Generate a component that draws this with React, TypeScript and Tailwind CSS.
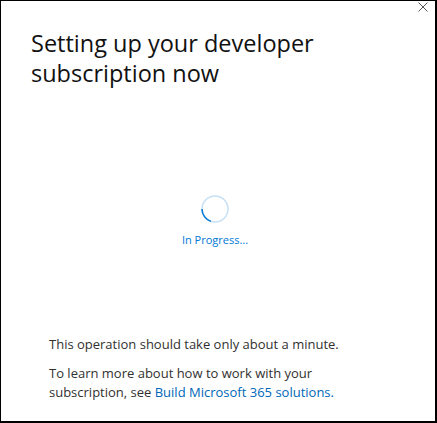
export default function App() {
  return (
    <div
      className="relative w-[437px] h-[423px] bg-white border-l border-t border-r-2 border-b-2 border-black"
      style={{ fontFamily: '"Open Sans", "Noto Sans", sans-serif' }}
    >
      {/* close */}
      <button className="absolute top-0 right-[5px] w-[12px] h-[12px] text-[#555]">
        <svg viewBox="0 0 10 10" className="w-[10px] h-[10px]" fill="none" stroke="currentColor" strokeWidth="1">
          <path d="M0.5 0.5 L9.5 9.5 M9.5 0.5 L0.5 9.5" />
        </svg>
      </button>

      <div className="flex flex-col h-full pl-[30px] pr-[30px]">
        <h1 className="pt-[27px] text-[23.5px] leading-[30px] text-[#111] font-normal">
          Setting up your developer
          <br />
          subscription now
        </h1>

        <div className="flex flex-col items-center mt-[106px] -ml-[6px]">
          <svg width="30" height="30" viewBox="0 0 30 30">
            <circle cx="15" cy="15" r="13" fill="none" stroke="#c7e0f4" strokeWidth="1.5" />
            <path d="M2 15 A13 13 0 0 0 11 27.4" fill="none" stroke="#0078d4" strokeWidth="1.5" />
          </svg>
          <div className="mt-[8px] text-[11px] text-[#0078d4]">In Progress...</div>
        </div>

        <div className="mt-[86px] pl-[18px] text-[13px] leading-[19px] text-[#323130]">
          <p>This operation should take only about a minute.</p>
          <p className="mt-[10px]">
            To learn more about how to work with your
            <br />
            subscription, see <span className="text-[#0067b8]">Build Microsoft 365 solutions.</span>
          </p>
        </div>
      </div>
    </div>
  );
}
